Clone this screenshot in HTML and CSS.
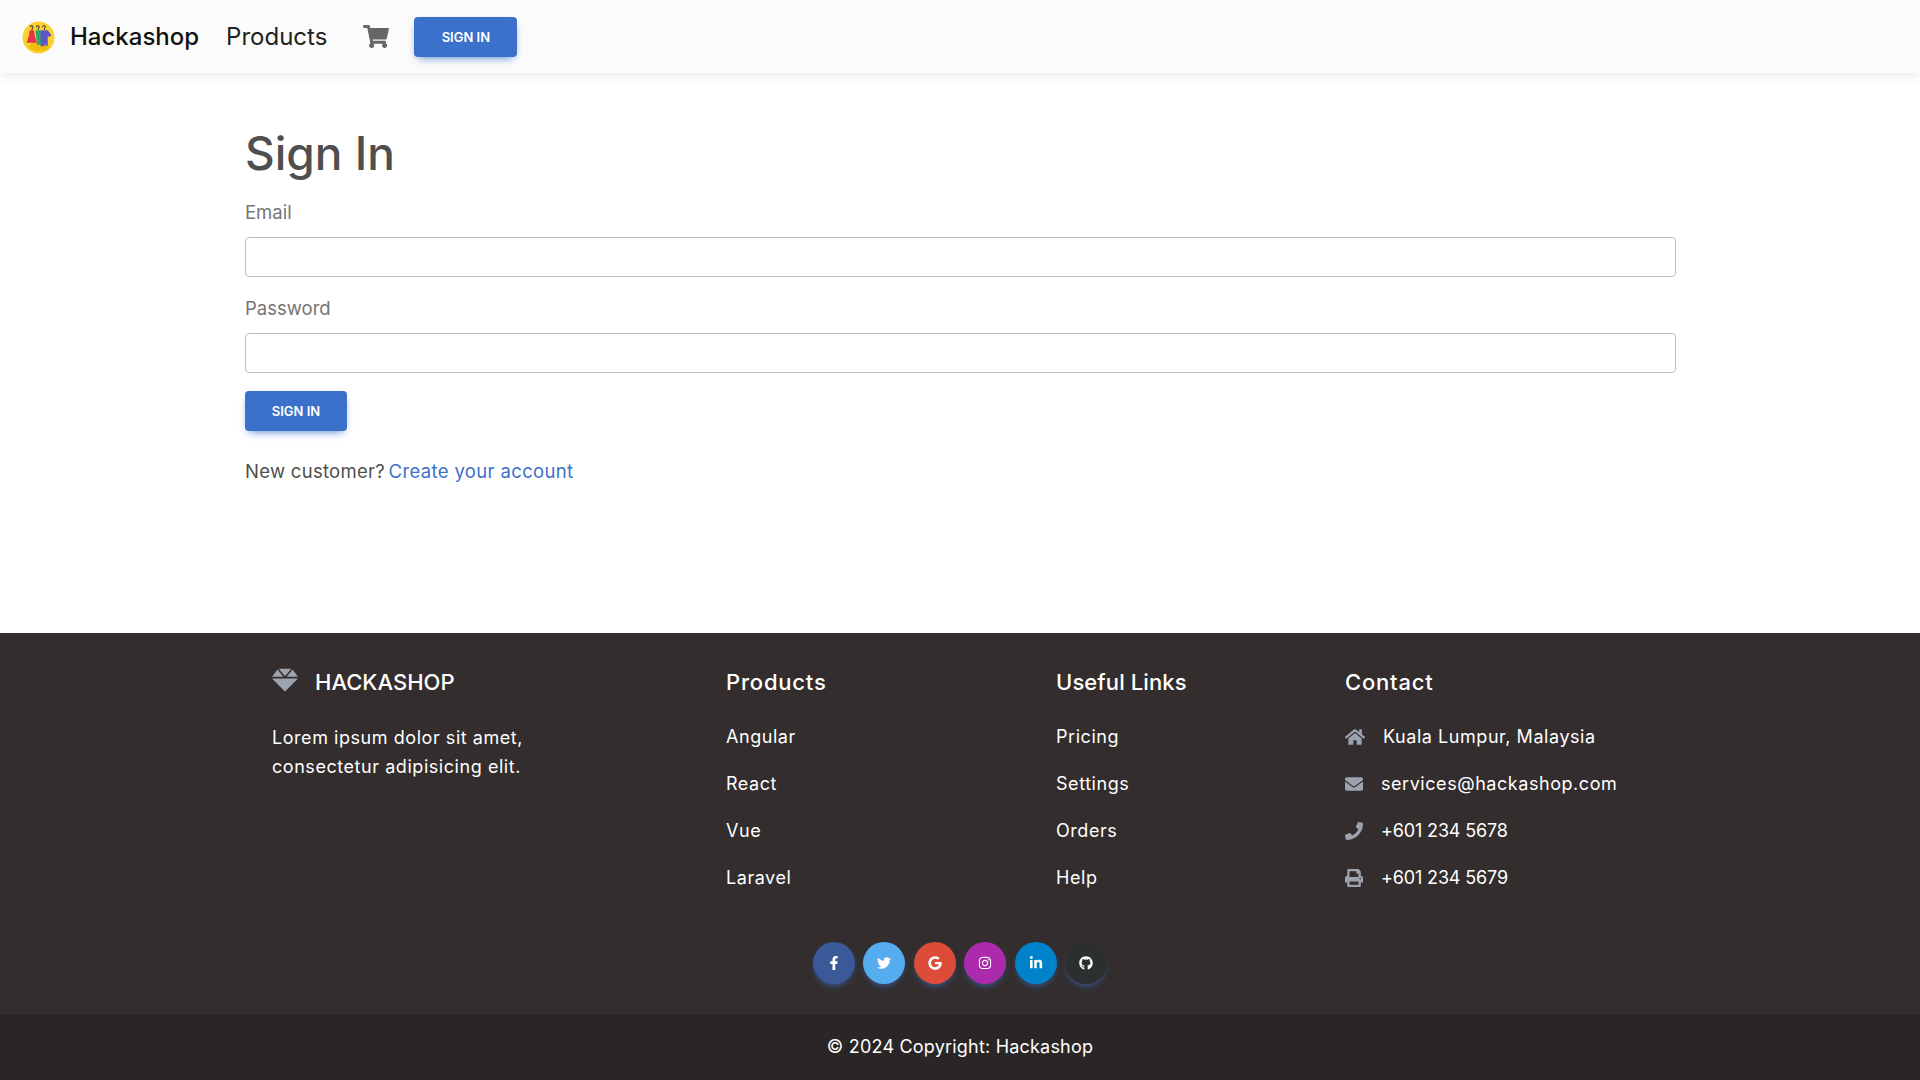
FILE: index.html
```html
<!DOCTYPE html>
<html lang="en">
<head>
<meta charset="utf-8">
<title>Hackashop</title>
<link rel="stylesheet" href="styles.css">
</head>
<body>
<nav class="navbar">
  <a class="brand" href="#">
    <svg class="logo" viewBox="0 0 32 32"><circle cx="16" cy="16" r="15.500" fill="#fbd132"/><path d="M6 25 12 20 28 25A16 16 0 0 1 6 25Z" fill="#f0bd0a"/><path d="M8 6c0-2 3-2 2.500 0L9.500 8.500M14 6c0-2 3-2 2.500 0L15.500 8.500M20 6c0-2 3-2 2.500 0L21.500 8.500" fill="none" stroke="#333" stroke-width="1"/><path d="M7.500 9h4l1 6 2 6H4.500l2-6Z" fill="#e8304a"/><path d="M13 9h6v14h-4.500Z" fill="#35a56a"/><path d="M19 9h6l3.500 5-2.500 1.500-1-1.500v10h-2.500v-3l-1 3.500H18V11Z" fill="#5b55c9"/></svg>
    <span>Hackashop</span>
  </a>
  <a class="nav-link" href="#">Products</a>
  <a class="cart" href="#"><svg viewBox="0 0 576 512"><path d="M528.12 301.319l47.273-208C578.806 78.301 567.391 64 551.99 64H159.208l-9.166-44.81C147.758 8.021 137.93 0 126.529 0H24C10.745 0 0 10.745 0 24v16c0 13.255 10.745 24 24 24h69.883l70.248 343.435C147.325 417.1 136 435.222 136 456c0 30.928 25.072 56 56 56s56-25.072 56-56c0-15.674-6.447-29.835-16.824-40h209.647C430.447 426.165 424 440.326 424 456c0 30.928 25.072 56 56 56s56-25.072 56-56c0-22.172-12.888-41.332-31.579-50.405l5.517-24.276c3.413-15.018-8.002-29.319-23.403-29.319H218.117l-6.545-32h293.145c11.206 0 20.92-7.754 23.403-18.681z"/></svg></a>
  <button class="btn btn-nav">Sign in</button>
</nav>

<main class="main">
  <h1>Sign In</h1>
  <label class="field-label">Email</label>
  <input class="field-input" type="email">
  <label class="field-label">Password</label>
  <input class="field-input" type="password">
  <button class="btn btn-form">Sign in</button>
  <p class="register">New customer? <a href="#">Create your account</a></p>
</main>

<footer class="footer">
  <div class="columns">
    <section>
      <h6 class="col-title brand-title"><svg class="gem" viewBox="0 0 512 512"><path d="M378.7 32H133.3L256 182.7L378.7 32zM512 192l-107.4-141.3L289.6 192H512zM107.4 50.67L0 192h222.4L107.4 50.67zM244.3 474.9C247.3 478.2 251.5 480 256 480s8.653-1.828 11.67-5.062L510.6 224H1.365L244.3 474.9z"/></svg>HACKASHOP</h6>
      <p class="about">Lorem ipsum dolor sit amet, consectetur adipisicing elit.</p>
    </section>
    <section>
      <h6 class="col-title">Products</h6>
      <ul class="links"><li>Angular</li><li>React</li><li>Vue</li><li>Laravel</li></ul>
    </section>
    <section>
      <h6 class="col-title title-links">Useful Links</h6>
      <ul class="links"><li>Pricing</li><li>Settings</li><li>Orders</li><li>Help</li></ul>
    </section>
    <section>
      <h6 class="col-title">Contact</h6>
      <ul class="links contact">
        <li><svg class="ci ci-home" viewBox="0 0 576 512"><path d="M280.37 148.26L96 300.11V464a16 16 0 0 0 16 16l112.06-.29a16 16 0 0 0 15.92-16V368a16 16 0 0 1 16-16h64a16 16 0 0 1 16 16v95.64a16 16 0 0 0 16 16.05L464 480a16 16 0 0 0 16-16V300L295.67 148.26a12.19 12.19 0 0 0-15.3 0zM571.6 251.47L488 182.56V44.05a12 12 0 0 0-12-12h-56a12 12 0 0 0-12 12v72.61L318.47 43a48 48 0 0 0-61 0L4.34 251.47a12 12 0 0 0-1.6 16.9l25.5 31A12 12 0 0 0 45.15 301l235.22-193.74a12.19 12.19 0 0 1 15.3 0L530.9 301a12 12 0 0 0 16.9-1.6l25.5-31a12 12 0 0 0-1.7-16.93z"/></svg>Kuala Lumpur, Malaysia</li>
        <li><svg class="ci" viewBox="0 0 512 512"><path d="M502.3 190.8c3.9-3.1 9.7-.2 9.7 4.7V400c0 26.5-21.5 48-48 48H48c-26.5 0-48-21.5-48-48V195.6c0-5 5.7-7.8 9.7-4.7 22.4 17.4 52.1 39.5 154.1 113.6 21.1 15.4 56.7 47.8 92.2 47.6 35.7.3 72-32.8 92.3-47.6 102-74.1 131.6-96.3 154-113.7zM256 320c23.2.4 56.6-29.2 73.4-41.4 132.7-96.3 142.8-104.7 173.4-128.7 5.8-4.5 9.2-11.5 9.2-18.9v-19c0-26.5-21.5-48-48-48H48C21.5 64 0 85.5 0 112v19c0 7.4 3.4 14.3 9.2 18.9 30.6 23.9 40.7 32.4 173.4 128.7 16.8 12.2 50.2 41.8 73.4 41.4z"/></svg>services@hackashop.com</li>
        <li class="phone"><svg class="ci" viewBox="0 0 512 512"><path d="M493.4 24.6l-104-24c-11.3-2.6-22.9 3.3-27.5 13.9l-48 112c-4.2 9.8-1.4 21.3 6.9 28l60.6 49.6c-36 76.7-98.9 140.5-177.2 177.2l-49.6-60.6c-6.8-8.3-18.2-11.1-28-6.9l-112 48C3.9 366.5-2 378.1.6 389.4l24 104C27.1 504.2 36.7 512 48 512c256.1 0 464-207.5 464-464 0-11.2-7.7-20.9-18.6-23.4z"/></svg>+601 234 5678</li>
        <li class="phone"><svg class="ci" viewBox="0 0 512 512"><path d="M448 192V77.25c0-8.49-3.37-16.62-9.37-22.63L393.37 9.37c-6-6-14.14-9.37-22.63-9.37H96C78.33 0 64 14.33 64 32v160c-35.35 0-64 28.65-64 64v112c0 8.84 7.16 16 16 16h48v96c0 17.67 14.33 32 32 32h320c17.67 0 32-14.33 32-32v-96h48c8.84 0 16-7.16 16-16V256c0-35.35-28.65-64-64-64zm-64 256H128v-96h256v96zm0-224H128V64h192v48c0 8.84 7.16 16 16 16h48v96zm48 72c-13.25 0-24-10.75-24-24 0-13.26 10.75-24 24-24s24 10.74 24 24c0 13.25-10.75 24-24 24z"/></svg>+601 234 5679</li>
      </ul>
    </section>
  </div>
  <div class="socials">
    <a class="social s-fb" href="#"><svg viewBox="0 0 320 512"><path d="M279.14 288l14.22-92.66h-88.91v-60.13c0-25.35 12.42-50.06 52.24-50.06h40.42V6.26S260.43 0 225.36 0c-73.22 0-121.08 44.38-121.08 124.72v70.62H22.89V288h81.39v224h100.17V288z"/></svg></a>
    <a class="social s-tw" href="#"><svg viewBox="0 0 512 512"><path d="M459.37 151.716c.325 4.548.325 9.097.325 13.645 0 138.72-105.583 298.558-298.558 298.558-59.452 0-114.68-17.219-161.137-47.106 8.447.974 16.568 1.299 25.34 1.299 49.055 0 94.213-16.568 130.274-44.832-46.132-.975-84.792-31.188-98.112-72.772 6.498.974 12.995 1.624 19.818 1.624 9.421 0 18.843-1.3 27.614-3.573-48.081-9.747-84.143-51.98-84.143-102.985v-1.299c13.969 7.797 30.214 12.67 47.431 13.319-28.264-18.843-46.781-51.005-46.781-87.391 0-19.492 5.197-37.36 14.294-52.954 51.655 63.675 129.3 105.258 216.365 109.807-1.624-7.797-2.599-15.918-2.599-24.04 0-57.828 46.782-104.934 104.934-104.934 30.213 0 57.502 12.67 76.67 33.137 23.715-4.548 46.456-13.32 66.599-25.34-7.798 24.366-24.366 44.833-46.132 57.827 21.117-2.273 41.584-8.122 60.426-16.243-14.292 20.791-32.161 39.308-52.628 54.253z"/></svg></a>
    <a class="social s-gg" href="#"><svg viewBox="0 0 488 512"><path d="M488 261.8C488 403.3 391.1 504 248 504 110.8 504 0 393.2 0 256S110.8 8 248 8c66.8 0 123 24.5 166.3 64.9l-67.5 64.9C258.5 52.6 94.3 116.6 94.3 256c0 86.5 69.1 156.6 153.7 156.6 98.2 0 135-70.4 140.8-106.9H248v-85.3h236.1c2.3 12.7 3.9 24.9 3.9 41.4z"/></svg></a>
    <a class="social s-ig" href="#"><svg viewBox="0 0 448 512"><path d="M224.1 141c-63.6 0-114.9 51.3-114.9 114.9s51.3 114.9 114.9 114.9S339 319.5 339 255.9 287.7 141 224.1 141zm0 189.6c-41.1 0-74.7-33.5-74.7-74.7s33.5-74.7 74.7-74.7 74.7 33.5 74.7 74.7-33.6 74.7-74.7 74.7zm146.4-194.3c0 14.9-12 26.8-26.8 26.8-14.9 0-26.8-12-26.8-26.8s12-26.8 26.8-26.8 26.8 12 26.8 26.8zm76.1 27.2c-1.7-35.9-9.9-67.7-36.2-93.9-26.2-26.2-58-34.4-93.9-36.2-37-2.1-147.9-2.1-184.9 0-35.8 1.7-67.6 9.9-93.9 36.1s-34.4 58-36.2 93.9c-2.1 37-2.1 147.9 0 184.9 1.7 35.9 9.9 67.7 36.2 93.9s58 34.4 93.9 36.2c37 2.1 147.9 2.1 184.9 0 35.9-1.7 67.7-9.9 93.9-36.2 26.2-26.2 34.4-58 36.2-93.9 2.1-37 2.1-147.8 0-184.8zM398.8 388c-7.8 19.6-22.9 34.7-42.6 42.6-29.5 11.7-99.5 9-132.1 9s-102.7 2.6-132.1-9c-19.6-7.8-34.7-22.9-42.6-42.6-11.7-29.5-9-99.5-9-132.1s-2.6-102.7 9-132.1c7.8-19.6 22.9-34.7 42.6-42.6 29.5-11.7 99.5-9 132.1-9s102.7-2.6 132.1 9c19.6 7.8 34.7 22.9 42.6 42.6 11.7 29.5 9 99.5 9 132.1s2.7 102.7-9 132.1z"/></svg></a>
    <a class="social s-li" href="#"><svg viewBox="0 0 448 512"><path d="M100.28 448H7.4V148.9h92.88zM53.79 108.1C24.09 108.1 0 83.5 0 53.8a53.79 53.79 0 0 1 107.58 0c0 29.7-24.1 54.3-53.79 54.3zM447.9 448h-92.68V302.4c0-34.7-.7-79.2-48.29-79.2-48.29 0-55.69 37.7-55.69 76.7V448h-92.78V148.9h89.08v40.8h1.3c12.4-23.5 42.69-48.3 87.88-48.3 94 0 111.28 61.9 111.28 142.3V448z"/></svg></a>
    <a class="social s-gh" href="#"><svg viewBox="0 0 496 512"><path d="M165.9 397.4c0 2-2.3 3.6-5.2 3.6-3.3 0-5.6-1.6-5.6-3.6 0-2 2.3-3.6 5.2-3.6 3-.3 5.6 1.3 5.6 3.6zm-31.1-4.5c-.7 2 1.3 4.3 4.3 4.9 2.6 1 5.6 0 6.2-2s-1.3-4.3-4.3-5.2c-2.6-.7-5.5.3-6.2 2.3zm44.2-1.7c-2.9.7-4.9 2.6-4.6 4.9.3 2 2.9 3.3 5.9 2.6 2.9-.7 4.9-2.6 4.6-4.6-.3-1.9-3-3.2-5.9-2.9zM244.8 8C106.1 8 0 113.3 0 252c0 110.9 69.8 205.8 169.5 239.2 12.8 2.3 17.3-5.6 17.3-12.1 0-6.2-.3-40.4-.3-61.4 0 0-70 15-84.7-29.8 0 0-11.4-29.1-27.8-36.6 0 0-22.9-15.7 1.6-15.4 0 0 24.9 2 38.6 25.8 21.9 38.6 58.6 27.5 72.9 20.9 2.3-16 8.8-27.1 16-33.7-55.9-6.2-112.3-14.3-112.3-110.5 0-27.5 7.6-41.3 23.6-58.9-2.6-6.5-11.1-33.3 2.6-67.9 20.9-6.5 69 27 69 27 20-5.6 41.5-8.5 62.8-8.5s42.8 2.9 62.8 8.5c0 0 48.1-33.6 69-27 13.7 34.7 5.2 61.4 2.6 67.9 16 17.7 25.8 31.5 25.8 58.9 0 96.5-58.9 104.2-114.8 110.5 9.2 7.9 17 22.9 17 46.4 0 33.7-.3 75.4-.3 83.6 0 6.500 4.600 14.400 17.300 12.100C428.200 457.800 496 362.900 496 252 496 113.300 383.500 8 244.800 8z"/></svg></a>
  </div>
  <div class="copyright">© 2024 Copyright: Hackashop</div>
</footer>
</body>
</html>
```
FILE: styles.css
```css
* { box-sizing: border-box; }
html, body { margin: 0; height: 100%; }
body {
  font-family: Inter, "Noto Sans", sans-serif;
  font-size: 17px;
  line-height: 1.6;
  color: #4f4f4f;
  background: #fff;
  display: flex;
  flex-direction: column;
  min-height: 1080px;
}
a { color: inherit; text-decoration: none; }

/* navbar */
.navbar {
  height: 73px;
  flex: none;
  background: #fbfbfb;
  display: flex;
  align-items: center;
  padding-left: 22px;
  box-shadow: 0 2px 12px rgba(0,0,0,.1);
  position: relative;
}
.brand {
  display: flex;
  align-items: center;
  gap: 15px;
  color: #111;
  font-size: 24px;
  font-weight: 500;
  padding-top: 2px;
}
.logo { width: 33px; height: 33px; }
.nav-link {
  margin-left: 27px;
  padding-top: 2px;
  color: #222;
  font-size: 24px;
  font-weight: 400;
}
.cart { margin-left: 36px; display: flex; }
.cart svg { width: 26px; height: 23px; fill: #666; }
.btn {
  background: #3b71ca;
  color: #fff;
  border: 0;
  border-radius: 4px;
  height: 40px;
  font: 600 13px Inter, sans-serif;
  text-transform: uppercase;
  box-shadow: 0 4px 9px -4px #3b71ca;
}
.btn-nav { width: 103px; margin-left: 25px; }

/* sign-in form */
.main {
  flex: 1;
  padding: 0 244px 0 245px;
}
h1 {
  font-size: 46px;
  font-weight: 500;
  line-height: 56px;
  margin: 52px 0 18px;
  color: #4f4f4f;
}
.field-label {
  display: block;
  font-weight: 400;
  line-height: 27px;
  color: #757575;
  font-size: 18.5px;
  margin-bottom: 11px;
}
.field-input {
  display: block;
  width: 100%;
  height: 40px;
  border: 1px solid #bdbdbd;
  border-radius: 4px;
  background: #fff;
  margin-bottom: 18px;
}
.btn-form { width: 102px; display: block; }
.register { margin: 27px 0 0; font-size: 18.5px; letter-spacing: .28px; line-height: 27px; color: #4f4f4f; }
.register a { color: #3b71ca; margin-left: -2px; letter-spacing: .36px; }

/* footer */
.footer { flex: none; background: #332d2d; color: #fff; }
.columns {
  display: grid;
  grid-template-columns: 454px 330px 289px 1fr;
  padding: 32px 0 0 272px;
}
.col-title { margin: 0 0 24px; font-size: 22px; font-weight: 500; line-height: 34px; letter-spacing: .8px; }
.brand-title { display: flex; align-items: center; gap: 17px; letter-spacing: 0; }
.title-links { letter-spacing: .1px; }
.gem { width: 26px; height: 26px; fill: #9ca3af; margin-top: -4px; }
.about { margin: 0; width: 280px; font-size: 18px; letter-spacing: .55px; line-height: 29px; }
.links { list-style: none; margin: 0; padding: 0; }
.links li { font-size: 18px; letter-spacing: .55px; line-height: 27px; margin-bottom: 20px; white-space: nowrap; }
.contact li { display: flex; align-items: center; gap: 18px; }
.contact .phone { letter-spacing: -.15px; }
.ci { width: 18px; height: 18px; fill: #9ca3af; flex: none; }
.ci-home { width: 20px; }
.socials {
  display: flex;
  justify-content: center;
  gap: 8.6px;
  padding: 31px 0 31px;
}
.social {
  width: 42px;
  height: 42px;
  border-radius: 50%;
  display: flex;
  align-items: center;
  justify-content: center;
  box-shadow: 0 4px 9px -4px #3b71ca;
}
.social svg { width: 14px; height: 14px; fill: #fff; }
.s-fb { background: #3b5998; }
.s-tw { background: #55acee; }
.s-gg { background: #dd4b39; }
.s-ig { background: #ac2bac; }
.s-li { background: #0082ca; }
.s-gh { background: #2b2f2f; }
.copyright {
  background: #2a2626;
  height: 65px;
  display: flex;
  align-items: center;
  justify-content: center;
  font-size: 18px;
  letter-spacing: .2px;
}
```
